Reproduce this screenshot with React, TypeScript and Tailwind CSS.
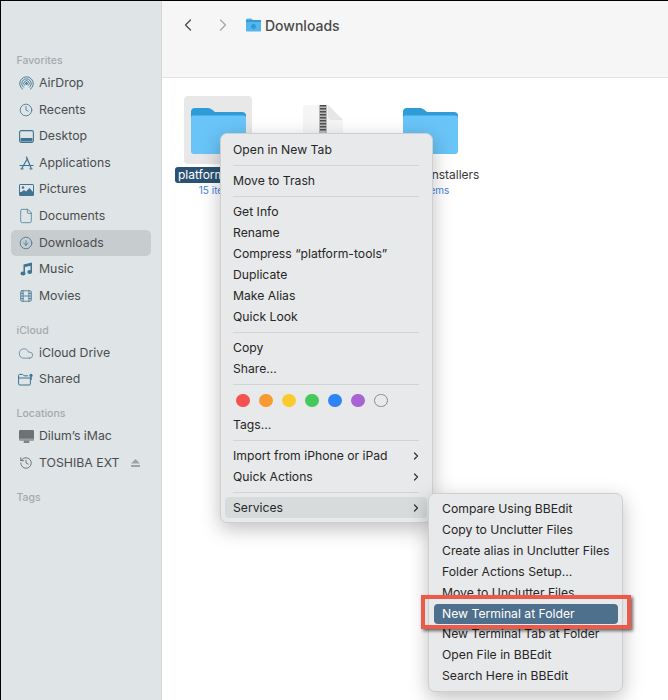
import React from "react";
import { Clock, File, CircleArrowDown, Film, Cloud, History, ChevronRight, ChevronLeft } from "lucide-react";

const ic = "#3f7492";

const AirDrop = () => (
  <svg width="15" height="15" viewBox="0 0 16 16" fill="none" stroke={ic} strokeWidth="1">
    <path d="M4.200 14.200a7.200 7.200 0 1 1 7.600 0" />
    <path d="M5.200 12.200a5 5 0 1 1 5.600 0" />
    <path d="M6.200 10.200a2.900 2.900 0 1 1 3.600 0" />
    <circle cx="8" cy="8" r="1" fill={ic} />
  </svg>
);
const Desktop = () => (
  <svg width="15" height="13" viewBox="0 0 15 13" fill="none">
    <rect x=".6" y=".6" width="13.800" height="11.800" rx="1.600" stroke={ic} strokeWidth="1.100" />
    <rect x="1.600" y="8" width="11.800" height="3.400" fill={ic} />
  </svg>
);
const Apps = () => (
  <svg width="15" height="14" viewBox="0 0 15 14" fill="none" stroke={ic} strokeWidth="1.200" strokeLinecap="round">
    <path d="M7.500 1 L12 12" />
    <path d="M8.200 3 L3 12" />
    <path d="M1 9.500 H14" />
    <path d="M2 12.800 h2 M11 12.800 h2" />
  </svg>
);
const Pictures = () => (
  <svg width="15" height="12" viewBox="0 0 15 12">
    <rect width="15" height="12" rx="1.500" fill={ic} />
    <rect x="1" y="1" width="13" height="7" fill="#dfe4e6" />
    <circle cx="4" cy="3.500" r="1.300" fill={ic} />
    <path d="M1 9 L5 6 L7 7.500 L10.500 4 L14 8 V11 H1Z" fill={ic} />
  </svg>
);
const MusicNote = () => (
  <svg width="13" height="14" viewBox="0 0 13 14" fill={ic}>
    <path d="M3.500 2.500 L12 .5 V3.500 L5 5 V11.500 H3.500Z" />
    <path d="M10.500 2 H12 V10 H10.500Z" />
    <ellipse cx="3" cy="11.500" rx="2.500" ry="2" />
    <ellipse cx="9.700" cy="10" rx="2.400" ry="2" />
  </svg>
);
const Shared = () => (
  <svg width="16" height="13" viewBox="0 0 16 13" fill="none" stroke={ic} strokeWidth="1">
    <path d="M.6 3.400 v7.600 a1 1 0 0 0 1 1 h9.800 a1 1 0 0 0 1-1 V5 H.6 M.6 5 V2.400 a1 1 0 0 1 1-1 h3 l1.400 1.400 h4" />
    <circle cx="13" cy="2.400" r="1.600" fill={ic} stroke="none" />
    <path d="M13 4 V7" strokeWidth="1.500" />
  </svg>
);
const IMac = () => (
  <svg width="15" height="14" viewBox="0 0 15 14">
    <rect width="15" height="10.500" rx="1.200" fill="#6d7274" />
    <rect y="8.600" width="15" height="2" rx=".8" fill="#9a9ea0" />
    <path d="M5 10.500 h5 l.5 2.500 h-6z" fill="#7f8486" />
  </svg>
);

type Item = { label: string; icon: React.ReactNode; active?: boolean; eject?: boolean };
const lucide = { size: 14, color: ic, strokeWidth: 1.4 };

const favorites: Item[] = [
  { label: "AirDrop", icon: <AirDrop /> },
  { label: "Recents", icon: <Clock {...lucide} /> },
  { label: "Desktop", icon: <Desktop /> },
  { label: "Applications", icon: <Apps /> },
  { label: "Pictures", icon: <Pictures /> },
  { label: "Documents", icon: <File {...lucide} size={16} strokeWidth={1.1} /> },
  { label: "Downloads", icon: <CircleArrowDown {...lucide} />, active: true },
  { label: "Music", icon: <MusicNote /> },
  { label: "Movies", icon: <Film {...lucide} /> },
];
const icloud: Item[] = [
  { label: "iCloud Drive", icon: <Cloud {...lucide} size={17} strokeWidth={1} /> },
  { label: "Shared", icon: <Shared /> },
];
const locations: Item[] = [
  { label: "Dilum’s iMac", icon: <IMac /> },
  { label: "TOSHIBA EXT", icon: <History size={14} color="#555b5e" strokeWidth={1.3} />, eject: true },
];

function SideSection({ title, items, className }: { title: string; items: Item[]; className?: string }) {
  return (
    <div className={className}>
      <div className="h-[16px] pl-[15.500px] text-[10.500px] leading-[16px] font-medium text-[#a5aaad]">{title}</div>
      <div className="mt-[1px] flex flex-col">
        {items.map((it) => (
          <div
            key={it.label}
            className={`ml-[10px] mr-[10px] flex h-[26.600px] items-center rounded-[5px] pl-[7px] text-[12.300px] text-[#4a4d50] ${it.active ? "bg-[#c7cccf]" : ""}`}
          >
            <span className="flex w-[16px] justify-center">{it.icon}</span>
            <span className="ml-[5px] flex-1">{it.label}</span>
            {it.eject && (
              <svg width="9" height="8" viewBox="0 0 9 8" className="mr-[11px]">
                <path d="M4.500 0 L9 4.600 H0Z M0 6 H9 V8 H0Z" fill="#9da2a5" />
              </svg>
            )}
          </div>
        ))}
      </div>
    </div>
  );
}

const Folder = () => (
  <svg width="57" height="49" viewBox="0 0 57 49">
    <path d="M1 6 a4 4 0 0 1 4-4 h13 a6 6 0 0 1 4 1.500 l3 2.500 h27 a4 4 0 0 1 4 4 V20 H1Z" fill="#2f9bd8" />
    <path d="M1 11 a2 2 0 0 1 2-2 h51 a2 2 0 0 1 2 2 v34 a3 3 0 0 1-3 3 H4 a3 3 0 0 1-3-3Z" fill="#69c4f7" />
    <path d="M1 9.500 a2 2 0 0 1 2-2 h51 a2 2 0 0 1 2 2 v2 a2 2 0 0 0-2-2 H3 a2 2 0 0 0-2 2Z" fill="#2f9bd8" />
  </svg>
);

const Zip = () => (
  <svg width="44" height="50" viewBox="0 0 44 50">
    <path d="M2 5 a2 2 0 0 1 2-2 h23 l15 15 v32 H2Z" fill="#f5f5f5" />
    <path d="M27 3 l15 15 h-11 a4 4 0 0 1-4-4Z" fill="#e6e6e6" />
    <rect x="18" y="3" width="8" height="47" fill="#b9b9b9" />
    <path d="M22 3 V30" stroke="#4d4d4d" strokeWidth="6" strokeDasharray="1.500 1.500" />
  </svg>
);

function Row({ children, hl }: { children: React.ReactNode; hl?: boolean }) {
  return (
    <div className={`mx-[5px] flex h-[21px] items-center justify-between whitespace-nowrap rounded-[4px] px-[8px] pt-[1px] text-[12.200px] text-[#262626] ${hl ? "bg-[#d8dbdc]" : ""}`}>
      {children}
    </div>
  );
}
const Sep = () => <div className="mx-[13px] my-[4.500px] h-px bg-[#d2d3d4]" />;
const Sub = ({ label, hl }: { label: string; hl?: boolean }) => (
  <Row hl={hl}>
    <span>{label}</span>
    <ChevronRight size={12} strokeWidth={2.4} color="#303030" className="-mr-[3px]" />
  </Row>
);

const tagColors = ["bg-[#f5524f]", "bg-[#f89a32]", "bg-[#fbcb2e]", "bg-[#46c95a]", "bg-[#2f83f4]", "bg-[#a864d2]"];

export default function App() {
  return (
    <div className="relative h-[700px] w-[668px] overflow-hidden bg-white font-['Inter','Liberation_Sans',sans-serif]">
      <div className="flex h-full border-l border-t border-black">
        <aside className="w-[161px] shrink-0 border-r border-[#d3d7d9] bg-[#dfe4e6] pt-[52px]">
          <SideSection title="Favorites" items={favorites} />
          <SideSection title="iCloud" items={icloud} className="mt-[13.400px]" />
          <SideSection title="Locations" items={locations} className="mt-[13.400px]" />
          <SideSection title="Tags" items={[]} className="mt-[13.400px]" />
        </aside>
        <main className="flex flex-1 flex-col">
          <header className="flex h-[77px] items-start border-b border-[#e3e3e3] bg-[#f6f6f6] pl-[16px] pt-[14px]">
            <ChevronLeft size={20} strokeWidth={1.5} color="#4a4a4a" />
            <ChevronRight size={20} strokeWidth={1.5} color="#a9a9a9" className="ml-[15px]" />
            <svg width="15" height="14" viewBox="0 0 15 14" className="ml-[13px] mt-[3px]">
              <path d="M0 2 a1.500 1.500 0 0 1 1.500-1.500 h4 l1.500 1.500 h6.500 a1.500 1.500 0 0 1 1.500 1.500 v9 a1 1 0 0 1-1 1 H1 a1 1 0 0 1-1-1Z" fill="#56b6ec" />
              <path d="M0 2 h15 v2 H0Z" fill="#2f9bd8" />
              <circle cx="7.500" cy="8.500" r="2.500" fill="#2f9bd8" />
            </svg>
            <span className="ml-[4px] text-[14px] leading-[22px] font-medium text-[#4a4a4a]">Downloads</span>
          </header>
          <section className="flex pl-[22px] pt-[18px]">
            <div className="flex w-[68px] flex-col items-center">
              <div className="flex h-[68px] w-[68px] items-center justify-center rounded-[4px] bg-[#e8e8e8]">
                <Folder />
              </div>
              <div className="mt-[3px] whitespace-nowrap rounded-[3px] bg-[#2b5272] px-[3px] text-[12px] leading-[16px] text-white">platform-tools</div>
              <div className="mt-[1px] text-[10px] leading-[12px] text-[#3d83e0]">15 items</div>
            </div>
            <div className="ml-[49px] flex w-[44px] flex-col items-center pt-[6px]">
              <Zip />
            </div>
            <div className="ml-[51px] flex w-[68px] flex-col items-center pt-[10px]">
              <Folder />
              <div className="mt-[12px] whitespace-nowrap text-[12px] leading-[16px] text-[#3a3a3a]">Android Installers</div>
              <div className="mt-[1px] whitespace-nowrap text-[10px] leading-[12px] text-[#3d83e0]">19 items</div>
            </div>
          </section>
        </main>
      </div>

      {/* context menu */}
      <div className="absolute left-[220px] top-[133px] w-[213px] rounded-[7px] border border-[#cfcfcf] bg-[#e8e9ea] pb-[3.500px] pt-[5.500px] shadow-[0_6px_20px_rgba(0,0,0,0.25)]">
        <div className="-ml-[1px]">
          <Row>Open in New Tab</Row>
          <Sep />
          <Row>Move to Trash</Row>
          <Sep />
          <Row>Get Info</Row>
          <Row>Rename</Row>
          <Row>Compress “platform-tools”</Row>
          <Row>Duplicate</Row>
          <Row>Make Alias</Row>
          <Row>Quick Look</Row>
          <Sep />
          <Row>Copy</Row>
          <Row>Share…</Row>
          <Sep />
          <div className="mx-[16px] flex h-[22px] items-center gap-[9.500px]">
            {tagColors.map((c) => (
              <span key={c} className={`h-[13.500px] w-[13.500px] rounded-full ${c}`} />
            ))}
            <span className="h-[13.500px] w-[13.500px] rounded-full border border-[#8b8b8b]" />
          </div>
          <div className="mt-[2.500px]"><Row>Tags…</Row></div>
          <div className="mt-[1px]"><Sep /></div>
          <Sub label="Import from iPhone or iPad" />
          <Sub label="Quick Actions" />
          <div className="mt-[1.500px]"><Sep /></div>
          <Sub label="Services" hl />
        </div>
      </div>

      {/* services submenu */}
      <div className="absolute left-[428px] top-[493px] w-[195px] rounded-[7px] border border-[#cfcfcf] bg-[#e8e9ea] pb-[4px] pt-[4.500px] shadow-[0_6px_20px_rgba(0,0,0,0.25)]">
        {[
          "Compare Using BBEdit",
          "Copy to Unclutter Files",
          "Create alias in Unclutter Files",
          "Folder Actions Setup…",
          "Move to Unclutter Files",
        ].map((t) => (
          <Row key={t}>{t}</Row>
        ))}
        <div className="mx-[4.500px] flex h-[20px] items-center rounded-[4px] bg-[#4f708c] px-[8.500px] pt-[1px] text-[12.200px] text-white">New Terminal at Folder</div>
        {["New Terminal Tab at Folder", "Open File in BBEdit", "Search Here in BBEdit"].map((t) => (
          <Row key={t}>{t}</Row>
        ))}
      </div>

      {/* red annotation */}
      <div className="absolute left-[421px] top-[595px] h-[34px] w-[210px] border-[4px] border-[#ee5a4a] shadow-[2px_2px_3px_rgba(0,0,0,0.55)]" />
    </div>
  );
}
